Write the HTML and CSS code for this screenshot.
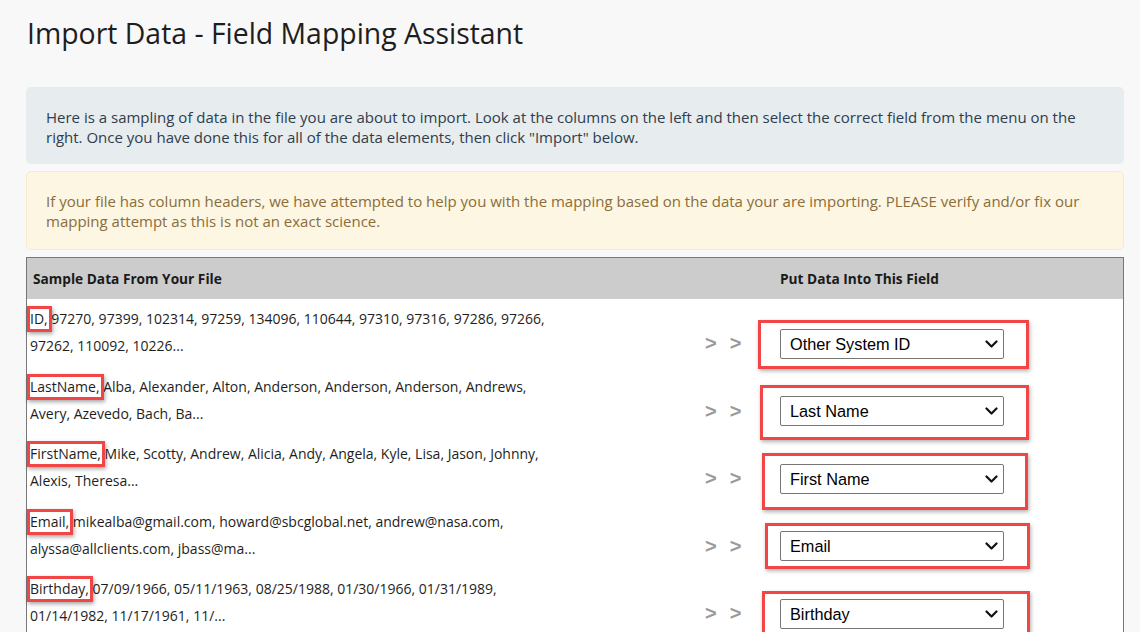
FILE: index.html
```html
<!DOCTYPE html>
<html lang="en">
<head>
<meta charset="utf-8">
<title>Import Data - Field Mapping Assistant</title>
<link rel="stylesheet" href="styles.css">
</head>
<body>
<main class="page">
  <h1 class="title">Import Data - Field Mapping Assistant</h1>

  <div class="note note-info">Here is a sampling of data in the file you are about to import. Look at the columns on the left and then select the correct field from the menu on the right. Once you have done this for all of the data elements, then click "Import" below.</div>

  <div class="note note-warn">If your file has column headers, we have attempted to help you with the mapping based on the data your are importing. PLEASE verify and/or fix our mapping attempt as this is not an exact science.</div>

  <section class="map">
    <div class="map-head">
      <div class="head-sample">Sample Data From Your File</div>
      <div class="head-field">Put Data Into This Field</div>
    </div>

    <div class="map-row r1">
      <div class="sample"><span class="key">ID,</span> 97270, 97399, 102314, 97259, 134096, 110644, 97310, 97316, 97286, 97266, 97262, 110092, 10226...</div>
      <div class="arrows"><span>&gt;</span><span>&gt;</span></div>
      <div class="field">
        <div class="pick">
          <select class="select"><option>Other System ID</option></select>
          <svg class="chev" width="13" height="8" viewBox="0 0 13 8"><path d="M1.5 1.5l5 5 5-5" fill="none" stroke="#111" stroke-width="2.2" stroke-linecap="round" stroke-linejoin="round"/></svg>
        </div>
      </div>
    </div>

    <div class="map-row r2">
      <div class="sample"><span class="key">LastName,</span> Alba, Alexander, Alton, Anderson, Anderson, Anderson, Andrews, Avery, Azevedo, Bach, Ba...</div>
      <div class="arrows"><span>&gt;</span><span>&gt;</span></div>
      <div class="field">
        <div class="pick">
          <select class="select"><option>Last Name</option></select>
          <svg class="chev" width="13" height="8" viewBox="0 0 13 8"><path d="M1.5 1.5l5 5 5-5" fill="none" stroke="#111" stroke-width="2.2" stroke-linecap="round" stroke-linejoin="round"/></svg>
        </div>
      </div>
    </div>

    <div class="map-row r3">
      <div class="sample"><span class="key">FirstName,</span> Mike, Scotty, Andrew, Alicia, Andy, Angela, Kyle, Lisa, Jason, Johnny, Alexis, Theresa...</div>
      <div class="arrows"><span>&gt;</span><span>&gt;</span></div>
      <div class="field">
        <div class="pick">
          <select class="select"><option>First Name</option></select>
          <svg class="chev" width="13" height="8" viewBox="0 0 13 8"><path d="M1.5 1.5l5 5 5-5" fill="none" stroke="#111" stroke-width="2.2" stroke-linecap="round" stroke-linejoin="round"/></svg>
        </div>
      </div>
    </div>

    <div class="map-row r4">
      <div class="sample"><span class="key">Email,</span> mikealba@gmail.com, howard@sbcglobal.net, andrew@nasa.com, alyssa@allclients.com, jbass@ma...</div>
      <div class="arrows"><span>&gt;</span><span>&gt;</span></div>
      <div class="field">
        <div class="pick">
          <select class="select"><option>Email</option></select>
          <svg class="chev" width="13" height="8" viewBox="0 0 13 8"><path d="M1.5 1.5l5 5 5-5" fill="none" stroke="#111" stroke-width="2.2" stroke-linecap="round" stroke-linejoin="round"/></svg>
        </div>
      </div>
    </div>

    <div class="map-row r5">
      <div class="sample"><span class="key">Birthday,</span> 07/09/1966, 05/11/1963, 08/25/1988, 01/30/1966, 01/31/1989, 01/14/1982, 11/17/1961, 11/...</div>
      <div class="arrows"><span>&gt;</span><span>&gt;</span></div>
      <div class="field">
        <div class="pick">
          <select class="select"><option>Birthday</option></select>
          <svg class="chev" width="13" height="8" viewBox="0 0 13 8"><path d="M1.5 1.5l5 5 5-5" fill="none" stroke="#111" stroke-width="2.2" stroke-linecap="round" stroke-linejoin="round"/></svg>
        </div>
      </div>
    </div>
  </section>
</main>
</body>
</html>
```

FILE: styles.css
```css
html, body {
  margin: 0;
  padding: 0;
  background: #f8f8f8;
  overflow: hidden;
}

.page {
  padding: 14px 16px 0 26px;
  font-family: "Open Sans", "Noto Sans", sans-serif;
  color: #222;
}

.title {
  margin: 0 0 35px 1px;
  font-size: 28.4px;
  font-weight: 400;
  line-height: 38px;
  color: #1e1e1e;
}

.note {
  font-size: 15px;
  line-height: 20px;
  border-radius: 5px;
  padding: 20px 40px 17px 20px;
}

.note-info {
  background: #e7ecef;
  color: #2f3d4c;
  margin-bottom: 7px;
}

.note-warn {
  background: #fdf6e2;
  border: 1px solid #f8ebcc;
  color: #8a6d3b;
  padding: 19px 40px 18px 19px;
  margin-bottom: 7px;
}

.map {
  border: 1px solid #777;
  border-bottom: 0;
  background: #fff;
  font-size: 14px;
}

.map-head {
  display: grid;
  grid-template-columns: 726px 1fr;
  height: 41px;
  align-items: center;
  background: #cccccc;
  font-size: 13.7px;
  font-weight: 700;
  color: #1a1a1a;
}

.head-sample {
  padding-left: 6px;
}

.head-field {
  padding-left: 27px;
}

.map-row {
  display: grid;
  grid-template-columns: 676px 50px 1fr;
  height: 67.5px;
}

.sample {
  padding: 6px 0 0 3px;
  width: 530px;
  line-height: 27px;
  color: #1e1e1e;
}

.key {
  position: relative;
}

.key::after {
  content: "";
  position: absolute;
  left: -3px;
  right: -4px;
  top: -3px;
  bottom: -4px;
  border: 3px solid #f24545;
  box-shadow: 1px 2px 4px rgba(0, 0, 0, 0.35);
}

.arrows {
  align-self: end;
  margin-bottom: 8px;
  height: 30px;
  display: flex;
  align-items: center;
  gap: 13px;
  padding-left: 2px;
  font-family: "Liberation Sans", Arial, sans-serif;
  font-weight: 700;
  font-size: 20px;
  color: #9a9a9a;
}

.field {
  align-self: end;
  margin-bottom: 8px;
  padding-left: 27px;
}

.pick {
  position: relative;
  width: 224px;
  height: 30px;
}

.pick::after {
  content: "";
  position: absolute;
  left: -22px;
  right: -25px;
  top: -9px;
  bottom: -10px;
  border: 3px solid #f24545;
  box-shadow: 1px 2px 4px rgba(0, 0, 0, 0.3);
  pointer-events: none;
}

.r2 .pick::after { left: -20px; top: -11px; bottom: -14px; }
.r3 .pick::after { left: -18px; right: -24px; top: -11px; bottom: -16px; }
.r4 .pick::after { left: -15px; right: -26px; top: -8px; bottom: -8px; }
.r5 .pick::after { left: -18px; right: -26px; top: -8px; bottom: -12px; }

.select {
  appearance: none;
  -webkit-appearance: none;
  box-sizing: border-box;
  width: 224px;
  height: 30px;
  margin: 0;
  padding: 0 30px 0 9px;
  border: 1px solid #767676;
  border-radius: 2px;
  background: #fff;
  font-family: "Liberation Sans", Arial, sans-serif;
  font-size: 16.3px;
  color: #000;
}

.chev {
  position: absolute;
  right: 6px;
  top: 11px;
  pointer-events: none;
}
```
